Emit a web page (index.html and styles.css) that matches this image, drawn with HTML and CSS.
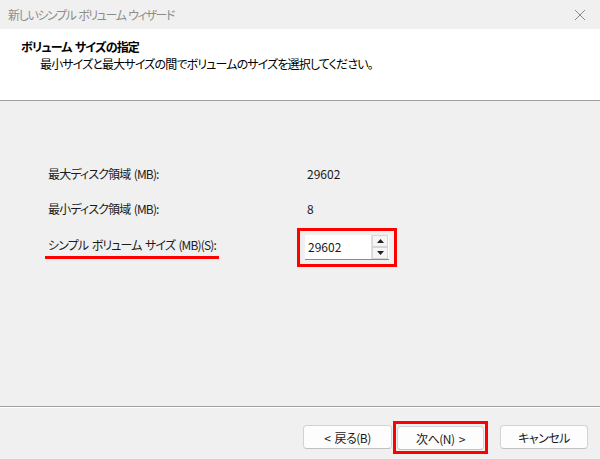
FILE: index.html
```html
<!DOCTYPE html>
<html lang="ja">
<head>
<meta charset="utf-8">
<link rel="stylesheet" href="styles.css">
</head>
<body>
<div class="window">
  <div class="titlebar">
    <span class="title">新しいシンプル ボリューム ウィザード</span>
    <svg class="close" width="12" height="12" viewBox="0 0 12 12"><path d="M1 1L11 11M11 1L1 11" stroke="#8a8a8a" stroke-width="1" fill="none"/></svg>
  </div>
  <div class="header">
    <div class="h-title">ボリューム サイズの指定</div>
    <div class="h-sub">最小サイズと最大サイズの間でボリュームのサイズを選択してください。</div>
  </div>
  <div class="content">
    <div class="row">
      <div class="label">最大ディスク領域 (MB):</div>
      <div class="value">29602</div>
    </div>
    <div class="row">
      <div class="label">最小ディスク領域 (MB):</div>
      <div class="value">8</div>
    </div>
    <div class="row">
      <div class="label"><span class="marked">シンプル ボリューム サイズ (MB)(S):</span></div>
      <div class="value">
        <div class="redbox spinbox-wrap">
          <div class="spin">
            <span class="spin-text">29602</span>
            <div class="spin-btns">
              <div class="spin-btn"><svg width="7" height="4" viewBox="0 0 7 4"><path d="M0 4L3.5 0L7 4Z" fill="#222"/></svg></div>
              <div class="spin-btn"><svg width="7" height="4" viewBox="0 0 7 4"><path d="M0 0L3.5 4L7 0Z" fill="#222"/></svg></div>
            </div>
          </div>
        </div>
      </div>
    </div>
  </div>
  <div class="footer">
    <button class="btn">&lt; 戻る(B)</button>
    <div class="redbox btn-wrap"><button class="btn">次へ(N) &gt;</button></div>
    <button class="btn cancel">キャンセル</button>
  </div>
</div>
</body>
</html>
```
FILE: styles.css
```css
html, body {
  margin: 0;
  padding: 0;
}
body {
  width: 600px;
  height: 459px;
  overflow: hidden;
  font-family: "Noto Sans CJK JP", "Noto Sans", sans-serif;
  font-size: 12px;
  font-feature-settings: "palt";
  letter-spacing: -0.85px;
  word-spacing: 1.5px;
  color: #1a1a1a;
  background: #f0f0f0;
}
.window {
  display: flex;
  flex-direction: column;
  height: 459px;
}
.titlebar {
  height: 29px;
  background: #f0f0f0;
  display: flex;
  align-items: center;
  justify-content: space-between;
  padding: 0 8px 0 8px;
  box-sizing: border-box;
}
.title {
  color: #8c8c8c;
  font-size: 12px;
  letter-spacing: -1.4px;
  line-height: 16px;
}
.close {
  margin-right: 6px;
}
.header {
  height: 72px;
  background: #fff;
  border-bottom: 1px solid #a0a0a0;
  box-sizing: border-box;
  padding: 10px 0 0 21px;
}
.h-title {
  font-weight: bold;
  line-height: 16px;
  color: #000;
}
.h-sub {
  padding-left: 19px;
  line-height: 18px;
  color: #000;
}
.content {
  flex: 1;
  padding: 55px 0 0 48px;
  box-sizing: border-box;
}
.row {
  display: flex;
  align-items: center;
  height: 35px;
}
.label {
  width: 259px;
  line-height: 16px;
}
.value {
  line-height: 16px;
  letter-spacing: 0;
}
.marked {
  display: inline-block;
  margin-left: -3px;
  padding: 0 3px 3px 3px;
  border-bottom: 3px solid #f00;
  position: relative;
  top: 4px;
}
.redbox {
  border: 3px solid #f00;
  box-sizing: border-box;
}
.spinbox-wrap {
  width: 100px;
  height: 39px;
  margin-left: -10px;
  margin-top: 7px;
  padding: 4px 5px 4px 5px;
}
.spin {
  height: 25px;
  background: #fff;
  border-bottom: 1px solid #8a8a8a;
  display: flex;
  align-items: center;
  justify-content: space-between;
  box-sizing: border-box;
}
.spin-text {
  padding-left: 3px;
  line-height: 16px;
}
.spin-btns {
  display: flex;
  flex-direction: column;
  width: 17px;
  height: 24px;
  border-left: 1px solid #e0e0e0;
  box-sizing: border-box;
  margin-right: 1px;
}
.spin-btn {
  flex: 1;
  display: flex;
  align-items: center;
  justify-content: center;
  background: #f5f5f5;
  border: 1px solid #d6d6d6;
}
.footer {
  height: 53px;
  border-top: 1px solid #a0a0a0;
  box-shadow: inset 0 1px 0 #fff;
  box-sizing: border-box;
  display: flex;
  align-items: flex-start;
  justify-content: flex-end;
  padding: 14px 12px 0 0;
}
.btn {
  width: 89px;
  height: 24px;
  margin-top: 4px;
  font-family: "Noto Sans CJK JP", "Noto Sans", sans-serif;
  font-size: 12px;
  font-feature-settings: "palt";
  letter-spacing: -0.5px;
  word-spacing: 2px;
  color: #1a1a1a;
  background: #fdfdfd;
  border: 1px solid #d3d3d3;
  border-bottom-color: #c0c0c0;
  border-radius: 4px;
  padding: 0;
}
.btn-wrap {
  width: 95px;
  height: 33px;
  margin-left: 1px;
  display: flex;
  justify-content: center;
  padding-top: 1px;
}
.btn-wrap .btn {
  width: 87px;
  margin-top: 1px;
}
.cancel {
  width: 88px;
  margin-left: 12px;
}
```
